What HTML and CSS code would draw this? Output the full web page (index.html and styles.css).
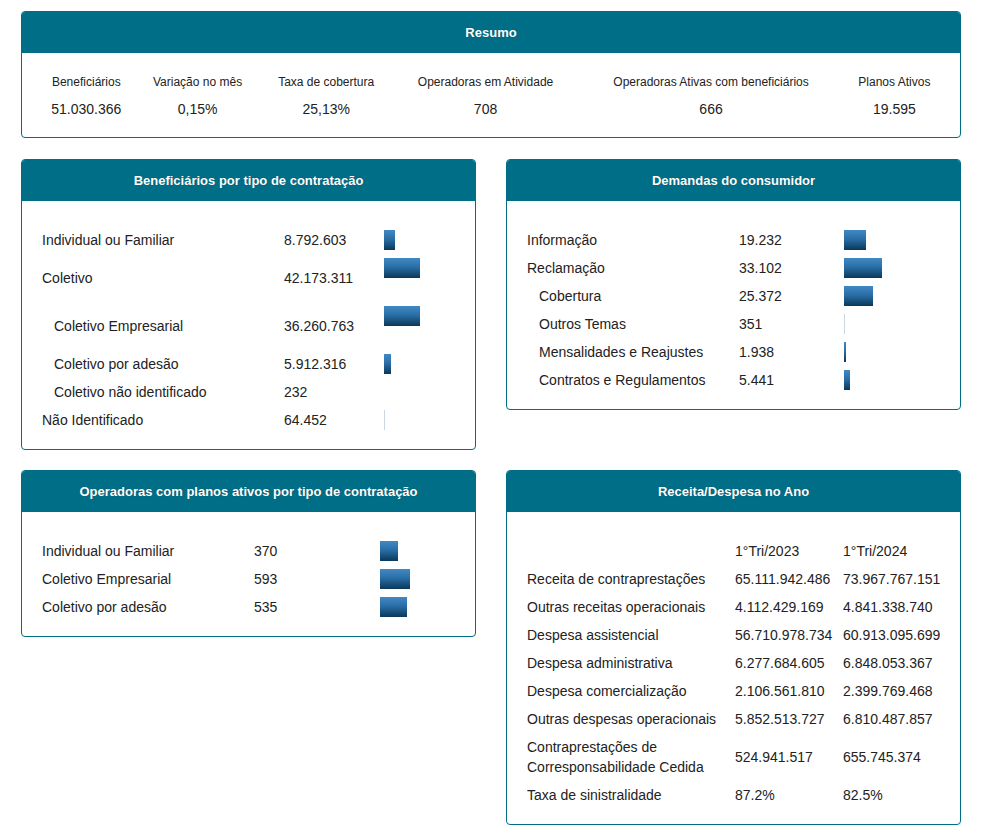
FILE: index.html
```html
<!DOCTYPE html>
<html lang="pt-BR">
<head>
<meta charset="utf-8">
<title>Painel</title>
<link rel="stylesheet" href="styles.css">
</head>
<body>
<div class="page">
  <section class="panel">
    <h2 class="panel-head">Resumo</h2>
    <div class="panel-body summary-body">
      <table class="summary">
        <tr class="summary-labels">
          <td>Beneficiários</td>
          <td>Variação no mês</td>
          <td>Taxa de cobertura</td>
          <td>Operadoras em Atividade</td>
          <td>Operadoras Ativas com beneficiários</td>
          <td>Planos Ativos</td>
        </tr>
        <tr class="summary-values">
          <td>51.030.366</td>
          <td>0,15%</td>
          <td>25,13%</td>
          <td>708</td>
          <td>666</td>
          <td>19.595</td>
        </tr>
      </table>
    </div>
  </section>

  <div class="grid">
    <section class="panel">
      <h2 class="panel-head">Beneficiários por tipo de contratação</h2>
      <div class="panel-body list list-benef">
        <div class="row"><span>Individual ou Familiar</span><span>8.792.603</span><span class="bar" style="width:11px"></span></div>
        <div class="row tall"><span>Coletivo</span><span>42.173.311</span><span class="bar" style="width:36px"></span></div>
        <div class="row tall"><span class="sub">Coletivo Empresarial</span><span>36.260.763</span><span class="bar" style="width:36px"></span></div>
        <div class="row"><span class="sub">Coletivo por adesão</span><span>5.912.316</span><span class="bar" style="width:7px"></span></div>
        <div class="row"><span class="sub">Coletivo não identificado</span><span>232</span><span></span></div>
        <div class="row"><span>Não Identificado</span><span>64.452</span><span class="bar faint"></span></div>
      </div>
    </section>

    <section class="panel">
      <h2 class="panel-head">Demandas do consumidor</h2>
      <div class="panel-body list list-dem">
        <div class="row"><span>Informação</span><span>19.232</span><span class="bar" style="width:22px"></span></div>
        <div class="row"><span>Reclamação</span><span>33.102</span><span class="bar" style="width:38px"></span></div>
        <div class="row"><span class="sub">Cobertura</span><span>25.372</span><span class="bar" style="width:29px"></span></div>
        <div class="row"><span class="sub">Outros Temas</span><span>351</span><span class="bar faint"></span></div>
        <div class="row"><span class="sub">Mensalidades e Reajustes</span><span>1.938</span><span class="bar" style="width:2px"></span></div>
        <div class="row"><span class="sub">Contratos e Regulamentos</span><span>5.441</span><span class="bar" style="width:6px"></span></div>
      </div>
    </section>

    <section class="panel">
      <h2 class="panel-head">Operadoras com planos ativos por tipo de contratação</h2>
      <div class="panel-body list list-oper">
        <div class="row"><span>Individual ou Familiar</span><span>370</span><span class="bar" style="width:18px"></span></div>
        <div class="row"><span>Coletivo Empresarial</span><span>593</span><span class="bar" style="width:30px"></span></div>
        <div class="row"><span>Coletivo por adesão</span><span>535</span><span class="bar" style="width:27px"></span></div>
      </div>
    </section>

    <section class="panel">
      <h2 class="panel-head">Receita/Despesa no Ano</h2>
      <div class="panel-body list list-fin">
        <div class="row"><span></span><span>1°Tri/2023</span><span>1°Tri/2024</span></div>
        <div class="row"><span>Receita de contraprestações</span><span>65.111.942.486</span><span>73.967.767.151</span></div>
        <div class="row"><span>Outras receitas operacionais</span><span>4.112.429.169</span><span>4.841.338.740</span></div>
        <div class="row"><span>Despesa assistencial</span><span>56.710.978.734</span><span>60.913.095.699</span></div>
        <div class="row"><span>Despesa administrativa</span><span>6.277.684.605</span><span>6.848.053.367</span></div>
        <div class="row"><span>Despesa comercialização</span><span>2.106.561.810</span><span>2.399.769.468</span></div>
        <div class="row"><span>Outras despesas operacionais</span><span>5.852.513.727</span><span>6.810.487.857</span></div>
        <div class="row"><span>Contraprestações de Corresponsabilidade Cedida</span><span>524.941.517</span><span>655.745.374</span></div>
        <div class="row"><span>Taxa de sinistralidade</span><span>87.2%</span><span>82.5%</span></div>
      </div>
    </section>
  </div>
</div>
</body>
</html>
```

FILE: styles.css
```css
* { box-sizing: border-box; }

html, body {
  margin: 0;
  padding: 0;
  background: #ffffff;
}

body {
  font-family: "Liberation Sans", Arial, Helvetica, sans-serif;
  color: #222222;
  font-size: 14px;
  line-height: 20px;
}

.page {
  width: 940px;
  margin: 11px 0 0 21px;
  display: flex;
  flex-direction: column;
  gap: 21px;
}

.grid {
  display: grid;
  grid-template-columns: 455px 455px;
  column-gap: 30px;
  row-gap: 20px;
  align-items: start;
}

.panel {
  border: 1px solid #006e87;
  border-radius: 4px;
  overflow: hidden;
  background: #fff;
}

.panel-head {
  margin: 0;
  height: 41px;
  background: #006e87;
  color: #ffffff;
  font-size: 13px;
  font-weight: bold;
  line-height: 41px;
  text-align: center;
  text-shadow: 0 0 1px rgba(0, 0, 0, 0.35);
}

.summary-body {
  padding: 15px;
}

.summary {
  width: 100%;
  border-collapse: collapse;
}

.summary td {
  padding: 0 2px;
  text-align: center;
  height: 27px;
  white-space: nowrap;
  vertical-align: middle;
}

.summary-labels td {
  font-size: 12px;
}

.summary-values td {
  font-size: 14px;
}

.list {
  padding: 25px 20px 15px 20px;
  display: flex;
  flex-direction: column;
}

.row {
  display: grid;
  align-items: center;
  min-height: 28px;
  padding: 4px 0;
}

.row.tall {
  height: 48px;
}

.row.tall .bar {
  align-self: start;
}

.list-benef .row { grid-template-columns: 242px 100px 1fr; }
.list-dem .row { grid-template-columns: 212px 105px 1fr; }
.list-oper .row { grid-template-columns: 212px 126px 1fr; }
.list-fin .row { grid-template-columns: 208px 108px 1fr; }

.list-fin .row > span:first-child {
  padding-right: 12px;
}

.sub {
  padding-left: 12px;
}

.bar {
  display: block;
  height: 20px;
  background: linear-gradient(to bottom, #4189c5 0%, #2a6ea6 45%, #0a3859 100%);
}

.bar.faint {
  width: 1px;
  background: #c9d7e4;
}
```
